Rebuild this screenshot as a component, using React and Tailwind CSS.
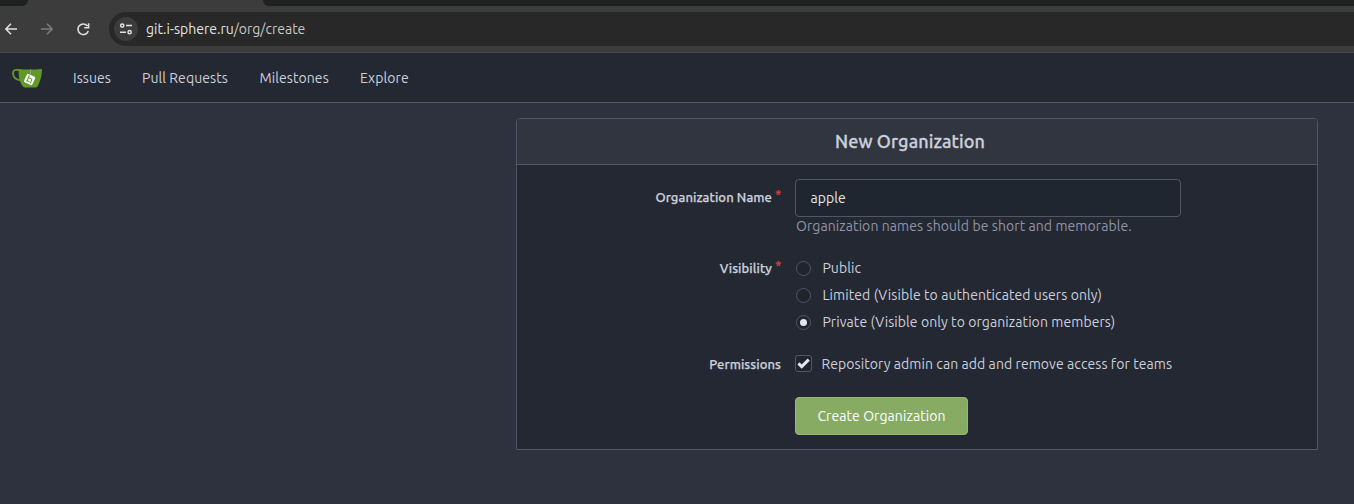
const link = "text-[14px] leading-5 tracking-[0.08px] whitespace-nowrap";

function Label({ children, required }) {
  return (
    <label className="w-[264px] shrink-0 text-right text-[13px] leading-5 font-medium tracking-[0.08px] whitespace-nowrap text-[#cbd0dc] [-webkit-text-stroke:0.25px]">
      {children}
      {required && <span className="ml-[3px] inline-block w-[6px] align-top text-[13px] leading-[14px] text-[#db3b3b]">*</span>}
    </label>
  );
}

function Radio({ checked, children }) {
  return (
    <div className="flex h-[27px] items-center">
      <span className="mt-px flex size-[15px] items-center justify-center rounded-full border border-[#51566a] bg-[#1f252d]">
        {checked && <span className="size-[7px] rounded-full bg-[#e3e6ed]" />}
      </span>
      <span className={"ml-[11.4px] text-[#cbd0dc] " + link}>{children}</span>
    </div>
  );
}

function GiteaLogo() {
  return (
    <svg className="mt-px" width="30" height="20" viewBox="0 0 30 20" fill="none">
      <path d="M8.5 1.9H3.9C1.6 1.9 1 3.8 1.1 5.7c.2 3.4 2.7 5.8 7.4 6.7" stroke="#609926" strokeWidth="1.9" />
      <path d="M6.8 1C12 1.7 22 1.7 30 1c0 5.3-1.2 10.9-3.9 16.5-.9 1.6-1.6 2.1-3.1 2.1h-9.6c-1.2 0-2-.4-2.7-1.3C7.6 14.3 6.1 7.7 6.8 1Z" fill="#609926" />
      <path d="M18.6 1.4v5.2" stroke="#8f9f80" strokeWidth="1" />
      <rect x="13.1" y="7" width="9" height="9" rx="1.2" transform="rotate(25 17.6 11.5)" fill="#fff" />
      <g transform="rotate(25 17.6 11.5)" stroke="#609926" strokeWidth="1">
        <path d="M15.8 8v6.6M15.8 10.2h3q1 0 1 1v3.4M15.8 13.6h2.6" />
      </g>
    </svg>
  );
}

export default function App() {
  return (
    <div className="flex h-[504px] w-[1354px] flex-col overflow-hidden bg-[#2e323e] font-['Ubuntu','Noto_Sans',sans-serif]">
      <div className="flex h-1.5 shrink-0 justify-between bg-[#3c3c3c]">
        <div className="w-7 rounded-br-[8px] bg-[#1f2020]" />
        <div className="w-[1091px] rounded-bl-[8px] bg-[#1f2020]" />
      </div>
      <div className="flex h-[47px] shrink-0 items-start border-b border-[#474747] bg-[#3c3c3c] pt-1.5">
        <div className="flex h-[34px] w-[109px] shrink-0 items-center">
          <svg className="ml-[5px]" width="12" height="12" viewBox="0 0 12 12" fill="none" stroke="#dedede" strokeWidth="1.6"><path d="M12 6H1M6 .7.9 6 6 11.3" /></svg>
          <svg className="ml-6" width="12" height="12" viewBox="0 0 12 12" fill="none" stroke="#7b7b7b" strokeWidth="1.6"><path d="M0 6h11M6 .7 11.1 6 6 11.3" /></svg>
          <svg className="ml-6" width="13" height="13" viewBox="0 0 13 13" fill="none" stroke="#dedede" strokeWidth="1.6"><path d="M10.4 2.9A5.3 5.3 0 1 0 11.3 8M11.6 .3v4.4H7.2" /></svg>
        </div>
        <div className="flex h-[34px] flex-1 items-center rounded-l-full bg-[#282828] pl-[5px]">
          <span className="flex size-6 items-center justify-center rounded-full bg-[#3c3c3c]">
            <svg width="14" height="12" viewBox="0 0 14 12" fill="none" stroke="#e3e3e3" strokeWidth="1.5"><circle cx="3.2" cy="2.6" r="1.6" /><path d="M7 2.6h6M1 9.2h6" /><circle cx="10.6" cy="9.2" r="1.6" /></svg>
          </span>
          <span className="ml-2 text-[14px] leading-5 whitespace-nowrap text-[#e3e3e3]">git.i-sphere.ru<span className="text-[#c7c7c7]">/org/create</span></span>
        </div>
      </div>
      <nav className="flex h-[50px] shrink-0 items-center border-b border-[#525767] bg-[#242833] pl-3 text-[#cbd0dc]">
        <GiteaLogo />
        <a className={"ml-[31px] w-[69px] " + link}>Issues</a>
        <a className={"w-[117.5px] " + link}>Pull Requests</a>
        <a className={"w-[100.5px] " + link}>Milestones</a>
        <a className={link}>Explore</a>
      </nav>
      <main className="mt-[15px] ml-[516px] flex h-[332px] w-[802px] flex-col rounded-t-[4px] border border-[#525767] bg-[#242833]">
        <h1 className="flex h-[46px] shrink-0 items-center justify-center rounded-t-[3px] border-b border-[#525767] bg-[#313540] pr-[14px] pb-0.5 text-[18px] leading-6 font-medium tracking-[0.1px] text-[#cbd0dc] [-webkit-text-stroke:0.3px]">New Organization</h1>
        <div className="mt-[14px] flex items-start">
          <div className="flex h-9 items-center"><Label required>Organization Name</Label></div>
          <div className="ml-[14px]">
            <div className="flex h-[38px] w-[386px] items-center rounded-[4px] border border-[#525767] bg-[#1f262f] px-[14.5px]"><span className={"text-[#e3e6ed] " + link}>apple</span></div>
            <div className={"-mt-px ml-px text-[#8f95a5] " + link}>Organization names should be short and memorable.</div>
          </div>
        </div>
        <div className="mt-[18px] flex items-start">
          <div className="flex h-[27px] items-center"><Label required>Visibility</Label></div>
          <div className="ml-[15px]">
            <Radio>Public</Radio>
            <Radio>Limited (Visible to authenticated users only)</Radio>
            <Radio checked>Private (Visible only to organization members)</Radio>
          </div>
        </div>
        <div className="mt-[15px] flex h-[27px] items-center">
          <Label>Permissions</Label>
          <span className="ml-[14px] flex size-[17px] items-center justify-center rounded-[3px] border border-[#51566a] bg-[#1f252d]">
            <svg width="13" height="11" viewBox="0 0 13 11" fill="none" stroke="#e3e6ed" strokeWidth="3"><path d="m1.4 5.4 3.3 3.2 7-7" /></svg>
          </span>
          <span className={"ml-[9.4px] text-[#cbd0dc] " + link}>Repository admin can add and remove access for teams</span>
        </div>
        <button className="mt-5 ml-[278px] flex h-[38px] w-[173px] shrink-0 items-center justify-center rounded-[4px] border border-[#98b878] bg-[#87ab63] text-white"><span className={link}>Create Organization</span></button>
      </main>
    </div>
  );
}
